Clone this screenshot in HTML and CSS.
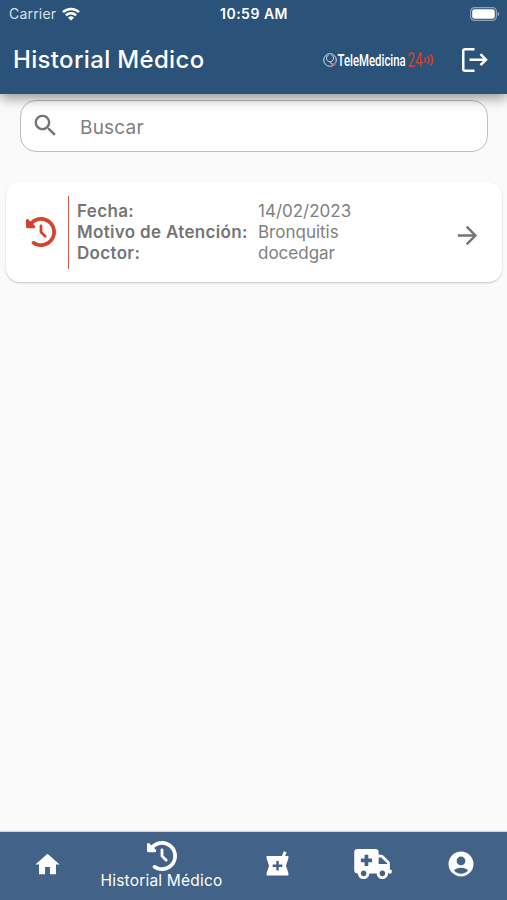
FILE: index.html
```
<!DOCTYPE html>
<html lang="es">
<head>
    <meta charset="UTF-8">
    <meta name="viewport" content="width=device-width, initial-scale=1.0">
    <title>Historial Médico</title>
    <link rel="stylesheet" href="styles.css">
</head>
<body>
<svg class="sprite">
    <symbol id="history" viewBox="0 0 512 512">
        <path d="M75 75L41 41C25.9 25.9 0 36.6 0 57.9V168c0 13.3 10.7 24 24 24H134.1c21.4 0 32.1-25.9 17-41l-30.8-30.8C155 85.5 203 64 256 64c106 0 192 86 192 192s-86 192-192 192c-40.8 0-78.6-12.7-109.7-34.4c-14.5-10.1-34.4-6.6-44.6 7.9s-6.6 34.4 7.9 44.6C151.2 495 201.7 512 256 512c141.4 0 256-114.6 256-256S397.4 0 256 0C185.3 0 121.3 28.7 75 75zm181 53c-13.3 0-24 10.7-24 24V256c0 6.4 2.5 12.5 7 17l72 72c9.4 9.4 24.6 9.4 33.9 0s9.4-24.6 0-33.9l-65-65V152c0-13.3-10.7-24-24-24z"/>
    </symbol>
</svg>
<div class="page">
    <div class="head">
        <div class="status">
            <div class="carrier">
                <span>Carrier</span>
                <svg class="wifi" width="18" height="14" viewBox="0 0 18 14" fill="none" stroke="#fff" stroke-width="2.5">
                    <path d="M1 5.2a11.4 11.4 0 0 1 16 0M3.900 8.300a7.300 7.300 0 0 1 10.200 0"/>
                    <path d="M9 13.600L6 10.700a4.300 4.300 0 0 1 6 0z" fill="#fff" stroke="none"/>
                </svg>
            </div>
            <span class="time">10:59 AM</span>
            <div class="power">
                <svg width="30" height="14" viewBox="0 0 30 14">
                    <rect x=".6" y=".6" width="25.8" height="12.8" rx="4" fill="none" stroke="#8ea3bb" stroke-width="1.2"/>
                    <rect x="2.2" y="2.2" width="22.6" height="9.6" rx="2.4" fill="#fff"/>
                    <path d="M27.6 4.8q1.8.8 1.8 2.2t-1.8 2.2z" fill="#8ea3bb"/>
                </svg>
            </div>
        </div>
        <div class="bar">
            <h1 class="title">Historial Médico</h1>
            <svg class="logo" width="112" height="36" viewBox="0 -7 112 36">
                <g fill="none" stroke="#cfdbe8" stroke-width="1">
                    <circle cx="7" cy="11" r="6.3"/>
                    <path d="M3.6 7.4c-.8 3 1 5.4 3.4 5.4s4.2-2.4 3.4-5.4M7 12.8q1 3 4 2.4M4 7.2l1.5-.6M10 7.2l-1.5-.6"/>
                </g>
                <circle cx="11.5" cy="15" r="1.5" fill="#e0503f"/>
                <text class="logo_name" transform="translate(14.5 17) scale(.55 1)" textLength="124" lengthAdjust="spacingAndGlyphs">TeleMedicina</text>
                <text class="logo_num" transform="translate(84.5 18.2) scale(.6 1)" textLength="25" lengthAdjust="spacingAndGlyphs">24</text>
                <g fill="none" stroke="#d5432f" stroke-width="1.7">
                    <path d="M101.5 8.500q2 2.500 0 5M104.500 6.800q3.400 4.200 0 8.400M107.500 5.200q4.400 5.800 0 11.600"/>
                </g>
            </svg>
            <svg class="logout" width="28" height="26" viewBox="0 0 28 26" fill="none" stroke="#fff" stroke-width="2.5">
                <path d="M13.5 2.250H4q-1.750 0-1.750 1.750v18q0 1.750 1.750 1.750h9.500"/>
                <path d="M8.5 12.700h16M19.500 7.200l5.500 5.500-5.500 5.500"/>
            </svg>
        </div>
    </div>
    <div class="content">
        <div class="search">
            <svg width="29" height="29" viewBox="0 0 24 24">
                <path d="M15.5 14h-.79l-.28-.27C15.41 12.59 16 11.11 16 9.5 16 5.91 13.09 3 9.5 3S3 5.91 3 9.5 5.91 16 9.5 16c1.61 0 3.09-.59 4.23-1.57l.27.28v.79l5 4.99L20.49 19l-4.99-5zm-6 0C7.01 14 5 11.99 5 9.5S7.01 5 9.5 5 14 7.01 14 9.5 11.99 14 9.5 14z"/>
            </svg>
            <span>Buscar</span>
        </div>
        <div class="card">
            <svg class="card_icon" width="30" height="30"><use href="#history"/></svg>
            <div class="data">
                <b>Fecha:</b><span>14/02/2023</span>
                <b>Motivo de Atención:</b><span>Bronquitis</span>
                <b>Doctor:</b><span>docedgar</span>
            </div>
            <svg class="go" width="29" height="29" viewBox="0 0 24 24">
                <path d="M12 4l-1.41 1.41L16.17 11H4v2h12.17l-5.58 5.59L12 20l8-8z"/>
            </svg>
        </div>
    </div>
    <div class="nav">
        <div class="item">
            <svg width="29" height="29" viewBox="0 0 24 24"><path d="M10 20v-6h4v6h5v-8h3L12 3 2 12h3v8z"/></svg>
        </div>
        <div class="item active">
            <svg width="30" height="30"><use href="#history"/></svg>
            <span>Historial Médico</span>
        </div>
        <div class="item">
            <svg width="29" height="29" viewBox="0 0 24 24"><path d="M21 5h-2.64l1.14-3.14L17.15 1l-1.46 4H3v2l2 6-2 6v2h18v-2l-2-6 2-6V5zm-5 9h-3v3h-2v-3H8v-2h3V9h2v3h3v2z"/></svg>
        </div>
        <div class="item">
            <svg width="38" height="30" viewBox="0 0 640 512"><path d="M624 352h-16V243.9c0-12.7-5.1-24.9-14.1-33.9L494 110.1c-9-9-21.2-14.1-33.9-14.1H416V48c0-26.5-21.5-48-48-48H48C21.5 0 0 21.5 0 48v320c0 26.5 21.5 48 48 48h16c0 53 43 96 96 96s96-43 96-96h128c0 53 43 96 96 96s96-43 96-96h48c8.8 0 16-7.2 16-16v-32c0-8.8-7.2-16-16-16zM160 464c-26.5 0-48-21.5-48-48s21.5-48 48-48 48 21.5 48 48-21.5 48-48 48zm144-248c0 4.4-3.6 8-8 8h-56v56c0 4.4-3.6 8-8 8h-48c-4.4 0-8-3.6-8-8v-56h-56c-4.4 0-8-3.6-8-8v-48c0-4.4 3.6-8 8-8h56v-56c0-4.4 3.6-8 8-8h48c4.4 0 8 3.6 8 8v56h56c4.4 0 8 3.6 8 8v48zm176 248c-26.5 0-48-21.5-48-48s21.5-48 48-48 48 21.5 48 48-21.5 48-48 48zm80-208H416V144h44.1l99.9 99.9V256z"/></svg>
        </div>
        <div class="item">
            <svg width="30" height="30" viewBox="0 0 24 24">
                <path fill-rule="evenodd" d="M12 2a10 10 0 1 0 0 20 10 10 0 0 0 0-20zM12 6a3.5 3.5 0 1 1 0 7 3.5 3.5 0 0 1 0-7zM12 15c2.4 0 4.4.8 5.600 2-1.200 1.700-3.300 2.700-5.600 2.700s-4.400-1-5.600-2.700c1.200-1.200 3.200-2 5.600-2z"/>
            </svg>
        </div>
    </div>
</div>
</body>
</html>
```

FILE: styles.css
```
html, body {
    height: 100%;
    margin: 0;
    font-family: Inter, "Liberation Sans", sans-serif;
}

svg {
    display: block;
    flex: none;
}

.sprite {
    width: 0;
    height: 0;
    position: absolute;
}

.page {
    height: 100%;
    display: flex;
    flex-direction: column;
    background-color: #fafafa;
    overflow: hidden;
}

.head {
    height: 94px;
    background-color: #2b5279;
    color: #fff;
    box-shadow: 0 4px 12px rgba(0, 0, 0, .42);
    position: relative;
    z-index: 1;
}

.status {
    height: 27px;
    display: grid;
    grid-template-columns: 1fr auto 1fr;
    align-items: center;
    padding: 0 7px 0 9px;
    font-size: 14px;
}

.carrier {
    display: flex;
    align-items: center;
    gap: 6px;
    color: #d8e1ea;
    letter-spacing: .2px;
}

.time {
    font-weight: 600;
    font-size: 14px;
    letter-spacing: .5px;
    margin-right: 1px;
}

.power {
    display: flex;
    justify-content: flex-end;
}

.bar {
    height: 66px;
    display: flex;
    align-items: center;
    padding: 0 18px 0 13px;
}

.title {
    flex: 1;
    margin: 0 0 2px;
    font-size: 24px;
    font-weight: 500;
    letter-spacing: .33px;
    white-space: nowrap;
}

.logo {
    margin-right: 26px;
}

.logo_name {
    font: 500 16px Roboto, sans-serif;
    fill: #fff;
}

.logo_num {
    font: 400 20px Roboto, sans-serif;
    fill: #d5432f;
}

.content {
    flex: 1;
    padding: 6px 5px 0 6px;
}

.search {
    height: 50px;
    margin: 0 14px;
    border: 1px solid #bdbdbd;
    border-radius: 16px;
    background-color: #fff;
    display: flex;
    align-items: center;
    gap: 20px;
    padding-left: 10px;
    color: #808080;
    font-size: 19px;
    letter-spacing: .2px;
}

.search svg, .go {
    fill: #757575;
}

.search svg {
    margin-bottom: 1px;
}

.search span {
    margin-top: 2px;
}

.card {
    height: 100px;
    margin-top: 30px;
    border-radius: 14px;
    background-color: #fff;
    box-shadow: 0 1px 2px rgba(0, 0, 0, .22);
    display: flex;
    align-items: center;
}

.card_icon {
    margin: 0 12px 0 20px;
    fill: #d5432f;
}

.data {
    flex: 1;
    height: 63px;
    padding: 5px 0 5px 8px;
    border-left: 1px solid #dc5a4a;
    display: grid;
    grid-template-columns: 181px 1fr;
    grid-auto-rows: 21px;
    line-height: 21px;
    font-size: 17px;
    color: #808080;
    white-space: nowrap;
}

.data b {
    font-weight: 600;
    letter-spacing: .33px;
    color: #757575;
}

.go {
    margin: 6px 20px 0 0;
}

.nav {
    height: 68px;
    background-color: #426287;
    box-shadow: 0 -1px 1px rgba(0, 0, 0, .15);
    display: grid;
    grid-template-columns: 94px 135px 96px 95px 82px;
}

.item {
    display: flex;
    flex-direction: column;
    align-items: center;
    justify-content: center;
    padding-bottom: 4px;
    fill: #fff;
}

.active {
    padding-bottom: 1px;
    color: #fff;
    font-size: 15.5px;
    white-space: nowrap;
    letter-spacing: .2px;
}
```
